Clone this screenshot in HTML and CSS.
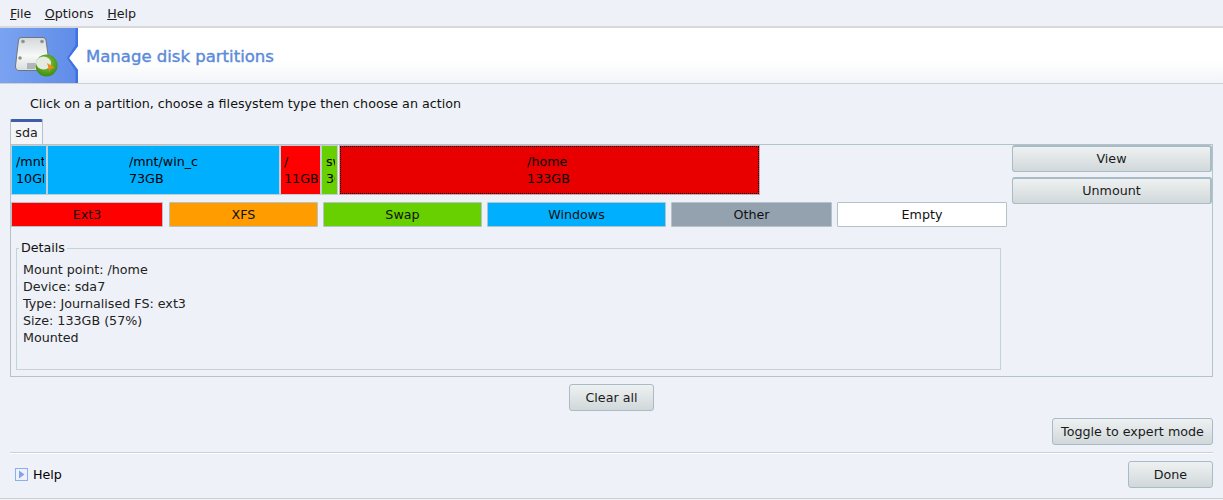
FILE: index.html
```html
<!DOCTYPE html>
<html lang="en">
<head>
<meta charset="utf-8">
<title>Manage disk partitions</title>
<link rel="stylesheet" href="styles.css">
</head>
<body>
<nav class="menubar">
  <span class="menu"><u>F</u>ile</span>
  <span class="menu"><u>O</u>ptions</span>
  <span class="menu"><u>H</u>elp</span>
</nav>
<header class="banner">
  <div class="banner-icon">
    <svg width="80" height="55" viewBox="0 0 80 55">
      <defs>
        <linearGradient id="blue" x1="0" y1="0" x2="1" y2="0"><stop offset="0" stop-color="#7ba3f2"/><stop offset="1" stop-color="#5f8ce8"/></linearGradient>
        <linearGradient id="disk" x1="0" y1="0" x2="0" y2="1"><stop offset="0" stop-color="#d2d7d9"/><stop offset=".55" stop-color="#f7f8f8"/><stop offset="1" stop-color="#d9dcdc"/></linearGradient>
        <radialGradient id="green" cx=".5" cy=".4" r=".6"><stop offset="0" stop-color="#8ccb3a"/><stop offset="1" stop-color="#3d8c12"/></radialGradient>
      </defs>
      <path d="M0 0H78V18L69 30L78 42V55H0Z" fill="url(#blue)"/>
      <path d="M75.500 0H78V18L69 30L78 42V55H75.500V43L67 30L75.500 17Z" fill="#3f73e4"/>
      <path d="M21 9.500H43Q45.500 9.500 46 12L49.500 38Q49.500 42.500 46 42.500H19Q15.500 42.500 15.500 38L18.500 12Q19 9.500 21 9.500Z" fill="url(#disk)" stroke="#6d7678" stroke-width="1"/>
      <circle cx="23" cy="13.500" r="1.800" fill="#8b9294"/>
      <circle cx="42" cy="13.500" r="1.800" fill="#8b9294"/>
      <circle cx="20" cy="30" r="1.800" fill="#8b9294"/>
      <path d="M28 35V41M30 35V41M32 35V41M34 35V41" stroke="#7d8688" stroke-width="1"/>
      <circle cx="46.500" cy="37.500" r="11" fill="url(#green)"/>
      <ellipse cx="43.500" cy="35" rx="7.500" ry="6.500" fill="#e6ebe2"/>
      <path d="M47 35L55 40L50 41L50 45Z" fill="#f28a1e"/>
    </svg>
  </div>
  <h1 class="banner-title">Manage disk partitions</h1>
</header>
<main class="content">
  <p class="hint">Click on a partition, choose a filesystem type then choose an action</p>
  <div class="tab">sda</div>
  <section class="panel">
    <div class="left">
      <div class="bars">
        <div class="part win w1"><div class="label"><span>/mnt</span><span>10GB</span></div></div>
        <div class="part win w2 center"><div class="label"><span>/mnt/win_c</span><span>73GB</span></div></div>
        <div class="part ext w3"><div class="label"><span>/</span><span>11GB</span></div></div>
        <div class="part swap w4"><div class="label"><span>swap</span><span>3GB</span></div></div>
        <div class="part ext-sel w5 center"><div class="label"><span>/home</span><span>133GB</span></div></div>
      </div>
      <div class="legend">
        <div class="chip ext l1">Ext3</div>
        <div class="chip xfs l2">XFS</div>
        <div class="chip swap l3">Swap</div>
        <div class="chip win l4">Windows</div>
        <div class="chip other l5">Other</div>
        <div class="chip empty l6">Empty</div>
      </div>
      <fieldset class="details">
        <legend>Details</legend>
        <div>Mount point: /home</div>
        <div>Device: sda7</div>
        <div>Type: Journalised FS: ext3</div>
        <div>Size: 133GB (57%)</div>
        <div>Mounted</div>
      </fieldset>
    </div>
    <div class="actions">
      <button class="btn action">View</button>
      <button class="btn action">Unmount</button>
    </div>
  </section>
  <div class="clear-row"><button class="btn clear">Clear all</button></div>
  <div class="toggle-row"><button class="btn toggle">Toggle to expert mode</button></div>
  <footer class="footer">
    <div class="help">
      <svg class="help-icon" width="13" height="13" viewBox="0 0 13 13">
        <rect x=".5" y=".5" width="12" height="12" fill="#eef1f7" stroke="#8aaef5"/>
        <path d="M4 2.500L9.500 6.500L4 10.500Z" fill="#7fa4ef"/>
      </svg>
      <span>Help</span>
    </div>
    <button class="btn done">Done</button>
  </footer>
</main>
<div class="bottom-line"></div>
</body>
</html>
```

FILE: styles.css
```css
* { box-sizing: border-box; }
html, body { margin: 0; height: 500px; overflow: hidden; }
body {
  background: #eef1f7;
  color: #000;
  font: 12.700px/17px "DejaVu Sans", sans-serif;
}
.menubar {
  height: 28px;
  display: flex;
  gap: 13.500px;
  padding: 5px 10px 0;
  border-bottom: 2px solid #d6dadb;
  color: #1a1a1a;
}
.banner {
  height: 56px;
  display: flex;
  align-items: center;
  background: linear-gradient(#fff 60%, #f2f4f8);
  border-bottom: 1px solid #ccd2d3;
}
.banner-icon { width: 80px; height: 55px; }
.banner-icon svg { display: block; }
.banner-title {
  margin: 1px 0 0 6px;
  font-size: 16.500px;
  font-weight: 500;
  color: #5b8ad9;
  -webkit-text-stroke: .4px #5b8ad9;
}
.content { padding: 0 10px; }
.hint { margin: 11px 0 0 20px; height: 24px; color: #111; }
.tab {
  width: 33px;
  height: 25px;
  padding-top: 2px;
  text-align: center;
  background: #f3f5f9;
  border: 1px solid #b2c3ca;
  border-top: 3px solid #3f5da8;
  border-bottom: 0;
  border-radius: 2px 2px 0 0;
  color: #222;
}
.panel {
  height: 233px;
  display: flex;
  justify-content: space-between;
  border: 1px solid #b2c3ca;
}
.left { width: 997px; }
.bars { display: flex; height: 50px; }
.part {
  height: 50px;
  border: 1px solid #bcd0d8;
  border-top-color: #c5ccd0;
  display: flex;
  padding: 7px 2px 0 4px;
}
.part.center { justify-content: center; padding-left: 0; padding-right: 0; }
.part.ext { padding-left: 3px; }
.part.ext-sel { padding-right: 2px; }
.label {
  display: flex;
  flex-direction: column;
  overflow: hidden;
  white-space: nowrap;
  height: 34px;
}
.w1 { width: 36px; }
.w2 { width: 233px; }
.w3 { width: 41px; }
.w4 { width: 17px; }
.w5 { width: 421px; }
.ext-sel {
  background: #e80000;
  border: 1px solid #c9aab0;
  outline: 1px dotted #000;
  outline-offset: -2px;
  margin-left: 1px;
}
.win { background: #00b0ff; }
.ext { background: #ff0000; }
.xfs { background: #ff9c00; }
.swap { background: #68cf00; }
.other { background: #94a2b0; }
.empty { background: #fff; }
.legend { display: flex; gap: 5px; margin-top: 7px; }
.chip {
  height: 25px;
  border: 1px solid #b2c3ca;
  border-radius: 1px;
  text-align: center;
  line-height: 23px;
  color: #111;
}
.l1 { width: 152px; margin-right: 1px; }
.l2 { width: 149px; }
.l3 { width: 159px; }
.l4 { width: 179px; }
.l5 { width: 161px; }
.l6 { width: 170px; }
.details {
  margin: 13px 0 0 5px;
  padding: 4px 6px 0;
  width: 985px;
  height: 130px;
  border: 1px solid #c5d3d6;
  color: #222;
}
.details legend { padding: 0 2px 2px; margin-left: -4px; line-height: 15px; color: #111; }
.actions { width: 201px; display: flex; flex-direction: column; align-items: flex-end; gap: 5px; }
.btn {
  font: inherit;
  color: #1a1a1a;
  background: linear-gradient(#eef1f2, #d1d8da);
  border: 1px solid #a9bbc4;
  border-radius: 3px;
  padding: 0;
  height: 27px;
}
.action { width: 200px; border-top-width: 2px; border-right-width: 2px; padding-bottom: 2px; }
.clear-row { display: flex; justify-content: center; margin-top: 7px; }
.clear { width: 85px; }
.toggle-row { display: flex; justify-content: flex-end; margin-top: 7px; }
.toggle { width: 161px; }
.footer {
  display: flex;
  justify-content: space-between;
  align-items: center;
  margin-top: 7px;
  padding-top: 8px;
  border-top: 1px solid #ccd2d3;
  box-shadow: inset 0 1px 0 #fff;
}
.help { display: flex; align-items: center; gap: 5px; padding-left: 5px; }
.help-icon { display: block; }
.done { width: 85px; }
.bottom-line { margin-top: 10px; height: 1px; background: #ccd2d3; }
```
